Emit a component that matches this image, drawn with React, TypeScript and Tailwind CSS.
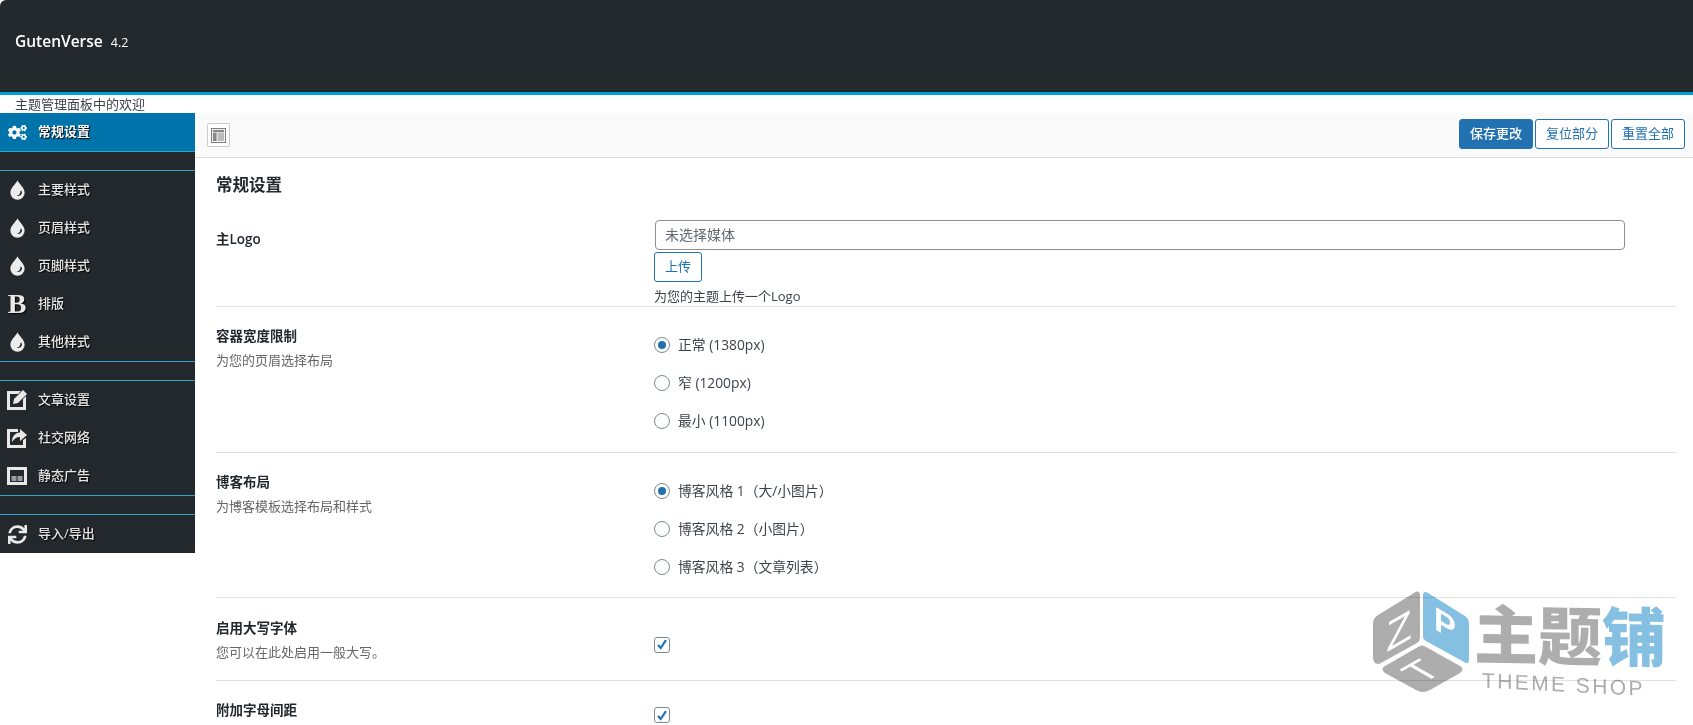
import { FaCogs, FaSync } from 'react-icons/fa';

const cjk = "font-['Open_Sans','Noto_Sans_CJK_SC',sans-serif]";

function Drop() {
  return (
    <svg viewBox="0 0 20 26" className="w-[15px] h-[20px]" fill="#ececec">
      <path
        fillRule="evenodd"
        d="M10 0c2 5 9.500 10 9.500 16.500a9.500 9.500 0 0 1-19 0C0.500 10 8 5 10 0ZM14 14c0 4-2 6-5 6.500 3 1.500 7-1 7-5 0-.6-1-1.500-2-1.500Z"
      />
    </svg>
  );
}

function EditIcon() {
  return (
    <svg viewBox="0 0 20 20" className="w-[20px] h-[20px]" fill="#e8e8e8">
      <path d="M0 1h14l-3 3H3v13h13V9l3-3v14H0Z" />
      <path d="M16 0l4 4-9 9-5 1 1-5Z" />
    </svg>
  );
}

function ShareIcon() {
  return (
    <svg viewBox="0 0 20 20" className="w-[20px] h-[20px]" fill="#e8e8e8">
      <path d="M0 1h11v3H3v13h13v-5l3-2v10H0Z" />
      <path d="M13 1l7 6-7 6V9c-4 0-6 2-8 5 0-6 3-9 8-9.500Z" />
    </svg>
  );
}

function AdIcon() {
  return (
    <svg viewBox="0 0 20 20" className="w-[20px] h-[20px]" fill="#e8e8e8">
      <path fillRule="evenodd" d="M0 1h20v18H0ZM3 4v12h14V4Z" />
      <path d="M4.500 10h5v5h-5ZM10.500 10h5v5h-5Z" opacity="0.6" />
    </svg>
  );
}

function PanelIcon() {
  return (
    <svg viewBox="0 0 16 16" className="w-[15px] h-[15px]">
      <rect x="0.5" y="0.5" width="15" height="15" fill="none" stroke="#777" />
      <rect x="2" y="2" width="12" height="2.500" fill="#888" />
      <rect x="2" y="5" width="4" height="9" fill="#888" />
      <rect x="7" y="5" width="7" height="9" fill="#bbb" />
    </svg>
  );
}

function SideItem({ icon, label, active }: { icon: React.ReactNode; label: string; active?: boolean }) {
  return (
    <div
      className={`h-[38px] flex items-center text-[13px] [text-shadow:1px_1px_1px_#000] ${
        active ? 'bg-[#0073aa] text-white font-bold' : 'text-[#e4e4e4] font-medium'
      }`}
    >
      <span className="w-[38px] flex justify-center shrink-0 pr-[4px]">{icon}</span>
      <span>{label}</span>
    </div>
  );
}

function Gap() {
  return <div className="h-[20px] border-y border-[#33a3c7]" />;
}

function Row({
  title,
  desc,
  children,
  last,
  titlePad = 'pt-[19px]',
}: {
  title: string;
  desc?: string;
  children: React.ReactNode;
  last?: boolean;
  titlePad?: string;
}) {
  return (
    <div className={`flex ${last ? '' : 'border-b border-[#e2e2e2]'}`}>
      <div className={`w-[438px] shrink-0 ${titlePad}`}>
        <div className="text-[13.500px] font-semibold text-[#23282d] leading-[20px]">{title}</div>
        {desc && <div className="text-[13px] text-[#666] leading-[20px] mt-[4px]">{desc}</div>}
      </div>
      <div className="flex-1 min-w-0">{children}</div>
    </div>
  );
}

function Radio({ label, checked }: { label: string; checked?: boolean }) {
  return (
    <label className="h-[38px] flex items-center gap-[8px] text-[13.800px] text-[#3c434a]">
      <span className="w-[16px] h-[16px] rounded-full border border-[#7e8993] bg-white flex items-center justify-center">
        {checked && <span className="w-[8px] h-[8px] rounded-full bg-[#2271b1]" />}
      </span>
      {label}
    </label>
  );
}

function Check() {
  return (
    <span className="w-[16px] h-[16px] rounded-[3px] border border-[#7e8993] bg-white flex items-center justify-center">
      <svg viewBox="0 0 16 16" className="w-[15px] h-[15px]">
        <path d="M3.500 8.500l3 3.500 6-9" fill="none" stroke="#2271b1" strokeWidth="2.500" />
      </svg>
    </span>
  );
}

function Btn({ label, primary }: { label: string; primary?: boolean }) {
  return (
    <button
      className={`h-[30px] w-[74px] rounded-[3px] border border-[#2271b1] text-[13px] ${
        primary ? 'bg-[#2271b1] text-white font-medium' : 'bg-white text-[#2271b1]'
      }`}
    >
      {label}
    </button>
  );
}

function Watermark() {
  return (
    <div className="absolute left-[1370px] top-[588px] w-[310px] h-[112px] pointer-events-none flex mix-blend-multiply">
      <svg viewBox="0 0 104 108" className="w-[104px] h-[108px] shrink-0">
        <path d="M44 5 Q50 1 50 8 V50 Q50 53 47 55 L11 75 Q5 78 3 71 V36 Q3 30 8 27Z" fill="#adadad" />
        <path d="M58 5 Q53 2 53 8 V49 Q53 51 56 53 L96 75 Q99 76 99 71 V36 Q99 31 95 28Z" fill="#85bfe2" />
        <path d="M48 59 Q52 56 56 59 L90 78 Q95 81 90 85 L60 102 Q53 106 46 102 L15 85 Q10 81 15 78Z" fill="#adadad" />
        <text
          fontSize="42"
          fill="#fff"
          fontFamily="Liberation Sans"
          textAnchor="middle"
          transform="translate(29 57) skewY(-30)"
        >
          Z
        </text>
        <text
          fontSize="33"
          fontWeight="700"
          fill="#fff"
          fontFamily="Liberation Sans"
          textAnchor="middle"
          transform="translate(75 47) skewY(30)"
        >
          P
        </text>
        <text
          fontSize="40"
          fill="#fff"
          fontFamily="Liberation Sans"
          textAnchor="middle"
          transform="matrix(.866 -.5 .866 .5 63 90)"
        >
          T
        </text>
      </svg>
      <div className="pl-[0px] pt-[16px]">
        <div className="text-[64px] leading-[64px] font-black text-[#adadad] [transform:skewY(1deg)] whitespace-nowrap">
          主题<span className="text-[#85bfe2]">铺</span>
        </div>
        <div className="text-[21px] leading-[24px] tracking-[2.400px] text-[#adadad] origin-left [transform:skewY(3deg)] pl-[8px] font-['Liberation_Sans',sans-serif] whitespace-nowrap">
          THEME SHOP
        </div>
      </div>
    </div>
  );
}

export default function App() {
  return (
    <div className={`relative h-[725px] overflow-hidden bg-white ${cjk}`}>
      <header className="h-[95px] bg-[#23282d] border-b-[3px] border-[#00a0d2] rounded-tl-[6px] flex items-center pl-[15px] pb-[9px] text-white">
        <span className="text-[15.500px] font-semibold">GutenVerse</span>
        <span className="text-[12.500px] ml-[8px] mt-[3px]">4.2</span>
      </header>
      <div className="h-[18px] pl-[15px] text-[13px] leading-[18px] text-[#3c434a]">主题管理面板中的欢迎</div>

      <div className="flex items-start">
        <aside className="w-[195px] shrink-0 bg-[#23282d]">
          <SideItem active label="常规设置" icon={<FaCogs className="text-[19px] text-white" />} />
          <Gap />
          <SideItem label="主要样式" icon={<Drop />} />
          <SideItem label="页眉样式" icon={<Drop />} />
          <SideItem label="页脚样式" icon={<Drop />} />
          <SideItem
            label="排版"
            icon={<span className="text-[28px] leading-none font-bold font-['Liberation_Serif',serif] text-[#e8e8e8]">B</span>}
          />
          <SideItem label="其他样式" icon={<Drop />} />
          <Gap />
          <SideItem label="文章设置" icon={<EditIcon />} />
          <SideItem label="社交网络" icon={<ShareIcon />} />
          <SideItem label="静态广告" icon={<AdIcon />} />
          <Gap />
          <SideItem label="导入/导出" icon={<FaSync className="text-[19px] text-[#e8e8e8]" />} />
        </aside>

        <main className="flex-1 min-w-0">
          <div className="h-[45px] bg-[#fafafa] border-b border-[#dcdcdc] flex items-center justify-between pl-[12px] pr-[8px]">
            <span className="w-[23px] h-[24px] bg-white border border-[#ccc] rounded-[2px] flex items-center justify-center">
              <PanelIcon />
            </span>
            <div className="flex gap-[2px] mt-[-2px]">
              <Btn primary label="保存更改" />
              <Btn label="复位部分" />
              <Btn label="重置全部" />
            </div>
          </div>

          <div className="pl-[21px] pr-[17px]">
            <h2 className="text-[16.500px] font-semibold text-[#23282d] leading-[24px] pt-[15px] pb-[23px]">常规设置</h2>

            <Row title="主Logo" titlePad="pt-[9px]">
              <div>
                <div className="ml-[1px] w-[970px] h-[30px] border border-[#8c8f94] rounded-[4px] px-[9px] text-[14px] leading-[27px] text-[#646970]">
                  未选择媒体
                </div>
                <button className="block mt-[2px] w-[48px] h-[30px] rounded-[3px] border border-[#2271b1] text-[13px] text-[#2271b1]">
                  上传
                </button>
                <div className="text-[13px] leading-[20px] mt-[4px] text-[#3c434a]">为您的主题上传一个Logo</div>
              </div>
            </Row>

            <Row title="容器宽度限制" desc="为您的页眉选择布局">
              <div className="pt-[19px] pb-[12px]">
                <Radio checked label="正常 (1380px)" />
                <Radio label="窄 (1200px)" />
                <Radio label="最小 (1100px)" />
              </div>
            </Row>

            <Row title="博客布局" desc="为博客模板选择布局和样式">
              <div className="pt-[19px] pb-[11px]">
                <Radio checked label="博客风格 1（大/小图片）" />
                <Radio label="博客风格 2（小图片）" />
                <Radio label="博客风格 3（文章列表）" />
              </div>
            </Row>

            <Row title="启用大写字体" desc="您可以在此处启用一般大写。" titlePad="pt-[20px]">
              <div className="h-[82px] flex items-center pt-[11px]">
                <Check />
              </div>
            </Row>

            <Row last title="附加字母间距">
              <div className="pt-[26px]">
                <Check />
              </div>
            </Row>
          </div>
        </main>
      </div>

      <Watermark />
    </div>
  );
}
